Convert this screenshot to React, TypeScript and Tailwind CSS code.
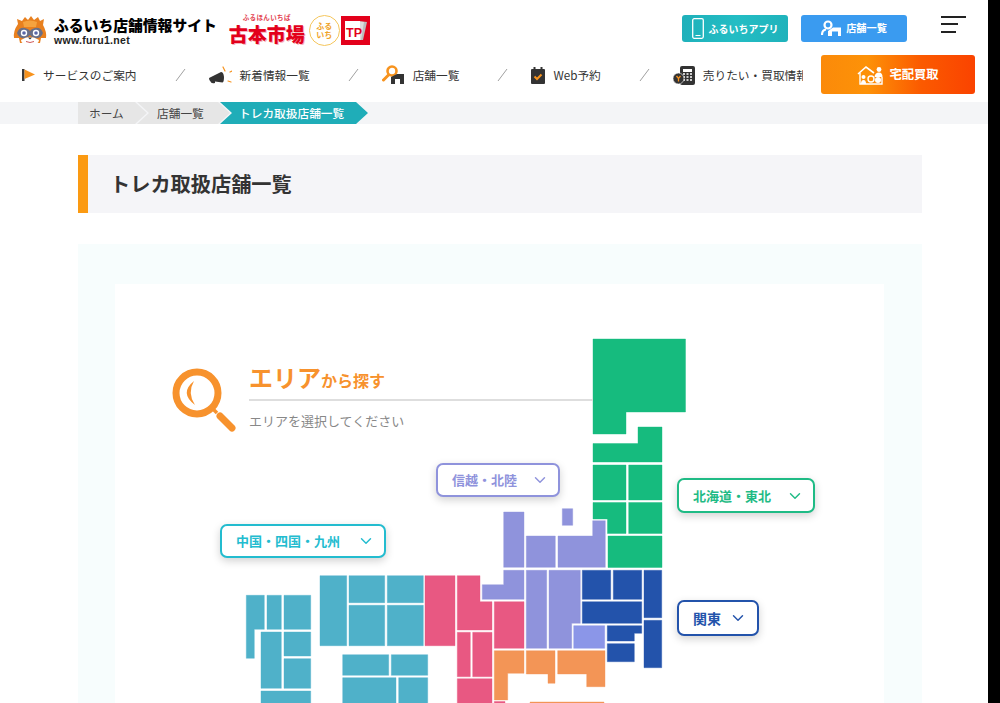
import React, { ReactElement, ReactNode } from 'react';
import { ChevronDown } from 'lucide-react';

const FlagIcon = (): ReactElement => (
  <svg width="14" height="14" viewBox="0 0 14 14">
    <rect x="0" y="1" width="2.5" height="12" fill="#3a3a3a" />
    <path d="M2.5 1.5 L13 6.5 L2.5 11 Z" fill="#f7931e" />
  </svg>
);

const MegaphoneIcon = (): ReactElement => (
  <svg width="23" height="20" viewBox="0 0 23 20">
    <path d="M0 13 L12 7 Q14.500 7 15 12 Q15 17 13.500 17.500 L6 16.500 L6 18 Q2 19 1.500 16.500 Q0 15.500 0 13 Z" fill="#333" />
    <path d="M14 2 L16 6 M21 7 L23 6 M19 16 L22 17" stroke="#f7931e" strokeWidth="1.2" strokeLinecap="round" />
  </svg>
);

const StoreIcon = (): ReactElement => (
  <svg width="23" height="20" viewBox="0 0 23 20">
    <circle cx="10" cy="6" r="4.500" fill="none" stroke="#f7931e" strokeWidth="2.600" />
    <path d="M6.500 10 L1.500 15" stroke="#f7931e" strokeWidth="3" strokeLinecap="round" />
    <path d="M9 19 V12 L15 9 H22 V19 H18 V14 H13 V19 Z" fill="#333" />
  </svg>
);

const CalendarIcon = (): ReactElement => (
  <svg width="14" height="17" viewBox="0 0 14 17">
    <rect x="0" y="2" width="14" height="15" rx="1" fill="#333" />
    <rect x="2.500" y="0" width="2" height="4" fill="#333" />
    <rect x="9.500" y="0" width="2" height="4" fill="#333" />
    <path d="M3.500 9.500 L6 12 L10.500 7.500" fill="none" stroke="#f7931e" strokeWidth="2" />
  </svg>
);

const CalcIcon = (): ReactElement => (
  <svg width="22" height="19" viewBox="0 0 22 19">
    <rect x="7" y="0" width="15" height="19" rx="2" fill="#333" />
    <rect x="10" y="3" width="9" height="3" fill="#fff" />
    <path d="M10 8 H19 M10 11 H19 M10 14 H19" stroke="#fff" strokeWidth="1.600" strokeDasharray="2 1.500" />
    <circle cx="5.500" cy="12.500" r="5.500" fill="#333" stroke="#fff" strokeWidth="0.600" />
    <path d="M3.500 10 L5.500 12.500 L7.500 10 M5.500 12.500 V15.500" fill="none" stroke="#f7931e" strokeWidth="1.300" />
  </svg>
);

const PhoneWhiteIcon = (): ReactElement => (
  <svg width="12" height="21" viewBox="0 0 12 21">
    <rect x="0.700" y="0.700" width="10.600" height="19.600" rx="1.500" fill="none" stroke="#fff" strokeWidth="1.300" />
    <path d="M3.500 17.500 H8.500" stroke="#fff" strokeWidth="1" />
  </svg>
);

const ShopWhiteIcon = (): ReactElement => (
  <svg width="21" height="17" viewBox="0 0 21 17">
    <circle cx="7" cy="5" r="3.500" fill="none" stroke="#fff" strokeWidth="2.200" />
    <path d="M1 15 Q1 10 5 9.500" fill="none" stroke="#fff" strokeWidth="2.200" />
    <path d="M7 16 V11 L12 7.500 H20 V16 H17 V11.500 H11 V16 Z" fill="#fff" />
  </svg>
);

const HouseFamilyIcon = (): ReactElement => (
  <svg width="26" height="20" viewBox="0 0 26 20">
    <path d="M1 9 L9 2 L17 8" fill="none" stroke="#fff" strokeWidth="1.600" />
    <path d="M3 8 V19 H25 V12" fill="none" stroke="#fff" strokeWidth="1.400" />
    <circle cx="6.500" cy="12" r="2" fill="#fff" />
    <path d="M4 19 Q4 15 6.500 15 Q9 15 9 19 Z" fill="#fff" />
    <circle cx="14" cy="14" r="3" fill="none" stroke="#fff" strokeWidth="1.400" />
    <circle cx="22" cy="4.500" r="2.400" fill="#fff" />
    <path d="M17.500 12 Q18 7.500 22 7.500 Q25.500 7.500 25.500 12 Z" fill="#fff" />
    <circle cx="21" cy="15" r="3" fill="#fff" />
  </svg>
);

const Mascot = (): ReactElement => (
  <svg width="34" height="29" viewBox="0 0 34 29">
    <path d="M5 8 L4 3 L9 5 L12 1 L15 4 L18 0 L21 4 L25 1 L27 5 L31 3 L30 9 Q34 16 33 22 L28 22 L27 27 H7 L6 22 L1 22 Q0 15 5 8 Z" fill="#e8801f" />
    <path d="M10 6 Q17 3 24 6 L23 11 H11 Z" fill="#f5a33f" />
    <path d="M4 17 Q6 11 12 12 Q16 13 17 15 Q18 13 22 12 Q28 11 30 17 Q28 23 22 22 Q18 21 17 19 Q16 21 12 22 Q6 23 4 17 Z" fill="#6a6f86" />
    <circle cx="11" cy="17" r="3.200" fill="#fff" />
    <circle cx="23" cy="17" r="3.200" fill="#fff" />
    <circle cx="11" cy="17" r="1.800" fill="#5a68a8" />
    <circle cx="23" cy="17" r="1.800" fill="#5a68a8" />
    <path d="M8 24 Q17 18 26 24 Q26 29 17 29 Q8 29 8 24 Z" fill="#fff" />
    <path d="M15 21.500 H19 L17 23.500 Z" fill="#333" />
    <path d="M13 25.500 Q17 27.500 21 25.500" fill="none" stroke="#d05a5a" strokeWidth="1" />
  </svg>
);

const TpLogo = (): ReactElement => (
  <svg width="29" height="29" viewBox="0 0 29 29">
    <rect width="29" height="29" fill="#e3001b" />
    <path d="M17 5 L26 6 L22 24 L18 24 Z" fill="#bbb" />
    <path d="M14 5 L23 6 L20 24 L15 24 Z" fill="#ddd" />
    <rect x="4" y="5" width="15" height="19" fill="#fff" />
    <text x="5" y="21" fontSize="12.500" fontWeight="900" fill="#e3001b" fontFamily="'Liberation Sans', sans-serif">TP</text>
  </svg>
);

const MagnifierIcon = (): ReactElement => (
  <svg width="64" height="65" viewBox="0 0 64 65">
    <circle cx="25" cy="25" r="21" fill="none" stroke="#f7922d" strokeWidth="7" />
    <path d="M22 13 Q7 25 23 37 Q15 25 22 13 Z" fill="#f7922d" />
    <path d="M41 41 L45 45" stroke="#f7922d" strokeWidth="3.500" />
    <path d="M48 48 L60 60" stroke="#f7922d" strokeWidth="7" strokeLinecap="round" />
  </svg>
);

const areas: { color: string; paths: string[] }[] = [
  {
    color: '#16bb7e',
    paths: [
      'M593 339 H685.500 V412 H626 V434 H593 Z',
      'M638 427 H662 V462 H593 V443.500 H638 Z',
      'M593 465 H626 V500 H593 Z',
      'M628.700 465 H662 V500 H628.700 Z',
      'M593 502.500 H626 V533.500 H607.500 V519 H593 Z',
      'M628.700 502.500 H662 V533.500 H628.700 Z',
      'M608 536 H662 V567.500 H608 Z',
    ],
  },
  {
    color: '#8f93dc',
    paths: [
      'M503.700 512 H524 V567.300 H503.700 Z',
      'M526.300 536 H555.300 V567.300 H526.300 Z',
      'M592.700 520.700 H605.300 V567.300 H558 V536 H592.700 Z',
      'M562.300 508.700 H572.700 V525.300 H562.300 Z',
      'M503.700 570.300 H524 V599.300 H482.300 V584.700 H503.700 Z',
      'M526.300 570.300 H546.700 V648.300 H526.300 Z',
      'M549 570.300 H580.300 V623.300 H571.700 V648.300 H549 Z',
    ],
  },
  {
    color: '#2353ab',
    paths: [
      'M582.300 570.300 H610.700 V599.300 H582.300 Z',
      'M613.300 570.300 H641.700 V599.300 H613.300 Z',
      'M644 570.300 H661.700 V617.700 H644 Z',
      'M582.300 601.700 H641.700 V623.300 H582.300 Z',
      'M607.300 625.700 H641.700 V633.300 H634.300 V641 H607.300 Z',
      'M607.300 643.700 H634.300 V661.700 H607.300 Z',
      'M644 620.300 H661.700 V667.700 H644 Z',
    ],
  },
  {
    color: '#e85882',
    paths: [
      'M425 575.700 H455 V645.700 H425 Z',
      'M457.300 575.700 H480 V601.700 H492 V630 H457.300 Z',
      'M494.300 601.700 H524 V648.300 H494.300 Z',
      'M457.300 632.300 H470.300 V676.700 H457.300 Z',
      'M472.700 632.300 H492 V676.700 H472.700 Z',
      'M457.300 678.700 H492 V710 H457.300 Z',
      'M494.300 701.500 H505 V710 H494.300 Z',
    ],
  },
  {
    color: '#f39556',
    paths: [
      'M494.300 650.700 H524 V673.300 H507.700 V700 H494.300 Z',
      'M526.300 650.700 H555 V683.300 H548 V674 H526.300 Z',
      'M557.700 650.700 H605 V686.700 H586.700 V674 H557.700 Z',
      'M530 702 H604 V710 H530 Z',
    ],
  },
  {
    color: '#4fb1c9',
    paths: [
      'M320 575.700 H346.700 V645.700 H320 Z',
      'M349 575.700 H384.700 V602.700 H349 Z',
      'M387.300 575.700 H423.300 V602.700 H387.300 Z',
      'M349 605.300 H384.700 V645.700 H349 Z',
      'M387.300 605.300 H423.300 V645.700 H387.300 Z',
      'M246.300 595.300 H264.300 V629.300 H254.300 V658.300 H246.300 Z',
      'M267 595.300 H281.300 V629.300 H267 Z',
      'M284 595.300 H310.700 V629.300 H284 Z',
      'M261 632 H281.300 V688.300 H261 Z',
      'M284 632 H310.700 V656 H284 Z',
      'M284 658.700 H310.700 V688.300 H284 Z',
      'M261 691 H310.700 V710 H261 Z',
      'M342.700 654.700 H388.700 V675.300 H342.700 Z',
      'M391.300 654.700 H427.700 V675.300 H391.300 Z',
      'M342.700 677.700 H396 V710 H342.700 Z',
      'M398.700 677.700 H427.700 V710 H398.700 Z',
    ],
  },
];

const JapanMap = (): ReactElement => (
  <svg className="absolute left-0 top-0" width="769" height="419" viewBox="115 284 769 419">
    {areas.map((area) => (
      <g key={area.color} fill={area.color} stroke={area.color} strokeWidth="0.400" strokeLinejoin="round">
        {area.paths.map((d) => (
          <path key={d} d={d} />
        ))}
      </g>
    ))}
    <path
      d="M573.700 625.700 H604.700 V648.300 H573.700 Z"
      fill="#8b96e8"
      stroke="#8b96e8"
      strokeWidth="0.400"
      strokeLinejoin="round"
    />
  </svg>
);

const NavItem = ({ icon, label }: { icon: ReactNode; label: string }): ReactElement => (
  <>
    <div className="flex shrink-0 items-center">
      {icon}
      <span className="whitespace-nowrap text-[11.700px] leading-none text-[#333]">{label}</span>
    </div>
    <svg className="ml-[38px] mr-[23px] shrink-0" width="11" height="14" viewBox="0 0 11 14">
      <path d="M10 1 L1 13" stroke="#888" strokeWidth="0.800" />
    </svg>
  </>
);

const AreaSelect = ({
  label,
  className,
  chevronClass,
}: {
  label: string;
  className: string;
  chevronClass: string;
}): ReactElement => (
  <div
    className={`absolute flex items-center rounded-[7px] border-2 bg-white font-bold shadow-[0_3px_8px_rgba(0,0,0,0.18)] ${className}`}
  >
    <span className="whitespace-nowrap">{label}</span>
    <ChevronDown className={`absolute top-1/2 -translate-y-1/2 ${chevronClass}`} size={18} strokeWidth={1.9} />
  </div>
);

export default function App(): ReactElement {
  return (
    <div className="flex h-[703px] overflow-hidden bg-white font-['Noto_Sans_CJK_JP','Noto_Sans',sans-serif]">
      <div className="w-[988px] shrink-0">
        <header className="h-[102px]">
          <div className="flex h-[50px] items-center pr-[22px]">
            <div className="ml-[13px] mt-[10px] flex items-center">
              <Mascot />
              <div className="ml-[7px] flex flex-col">
                <span className="text-[14.800px] font-black leading-[18px] text-black">ふるいち店舗情報サイト</span>
                <span className="mt-[1px] font-['Liberation_Sans',sans-serif] text-[10.500px] font-bold leading-[10px] tracking-[0.03em] text-[#222]">
                  www.furu1.net
                </span>
              </div>
              <div className="ml-[11px] -mt-[2px] flex w-[78px] flex-col items-center">
                <span className="text-[6.500px] font-bold leading-[9px] tracking-[0.06em] text-[#e3414f]">ふるほんいちば</span>
                <span className="whitespace-nowrap text-[19px] font-black leading-[23px] text-[#e3001b] [text-shadow:1px_1px_0_#f4b4bc]">
                  古本市場
                </span>
              </div>
              <div className="ml-[3px] flex h-[31px] w-[31px] flex-col items-center justify-center rounded-full border border-[#f5c65c] text-[8px] font-bold leading-[9px] text-[#f0a32a]">
                <span>ふる</span>
                <span>いち</span>
              </div>
              <div className="ml-[1px]">
                <TpLogo />
              </div>
            </div>
            <div className="ml-auto mt-[6px] flex h-[27px] w-[106px] items-center justify-center gap-[5px] rounded-[3px] bg-[linear-gradient(100deg,#1fb0ba,#23bdc4,#1fb2bb)]">
              <PhoneWhiteIcon />
              <span className="text-[10px] font-bold text-white">ふるいちアプリ</span>
            </div>
            <div className="ml-[13px] mt-[6px] flex h-[27px] w-[106px] items-center justify-center gap-[4px] rounded-[3px] bg-[#3a9bf0]">
              <ShopWhiteIcon />
              <span className="text-[10.200px] font-bold text-white">店舗一覧</span>
            </div>
            <div className="ml-[34px] -mt-[2px] flex w-[25px] flex-col gap-[5.500px]">
              <div className="h-[2px] w-[25px] bg-[#222]" />
              <div className="h-[2px] w-[17px] bg-[#222]" />
              <div className="h-[2px] w-[15px] bg-[#222]" />
            </div>
          </div>
          <div className="flex h-[52px] items-start">
            <div className="mt-[5px] flex h-[40px] w-[803px] items-center overflow-hidden pl-[22px]">
              <NavItem icon={<span className="mr-[7px] flex"><FlagIcon /></span>} label="サービスのご案内" />
              <NavItem icon={<span className="mr-[8px] flex"><MegaphoneIcon /></span>} label="新着情報一覧" />
              <NavItem icon={<span className="mr-[8px] flex"><StoreIcon /></span>} label="店舗一覧" />
              <NavItem icon={<span className="mr-[8px] flex"><CalendarIcon /></span>} label="Web予約" />
              <NavItem icon={<span className="mr-[8px] flex"><CalcIcon /></span>} label="売りたい・買取情報" />
            </div>
            <div className="ml-[18px] mt-[5px] flex h-[39px] w-[154px] items-center justify-center gap-[6px] rounded-[3px] bg-[linear-gradient(90deg,#fb8a0a,#fd9208_30%,#fb5a00_65%,#fa4300)]">
              <HouseFamilyIcon />
              <span className="text-[12.300px] font-bold text-white">宅配買取</span>
            </div>
          </div>
        </header>

        <nav className="h-[22px] bg-[#f4f5f7] pl-[78px]">
          <ol className="flex h-[22px] items-center text-[11.700px] leading-none text-[#444]">
            <li className="flex h-[22px] w-[69px] items-center bg-[#e6e6e6] pl-[11px] [clip-path:polygon(0_0,calc(100%-12px)_0,100%_50%,calc(100%-12px)_100%,0_100%)]">
              ホーム
            </li>
            <li className="-ml-[10px] flex h-[22px] w-[93px] items-center bg-[#e6e6e6] pl-[20px] [clip-path:polygon(0_0,calc(100%-12px)_0,100%_50%,calc(100%-12px)_100%,0_100%,12px_50%)]">
              店舗一覧
            </li>
            <li className="-ml-[10px] flex h-[22px] w-[148px] items-center bg-[#1fadb8] pl-[19px] font-medium text-white [clip-path:polygon(0_0,calc(100%-12px)_0,100%_50%,calc(100%-12px)_100%,0_100%,12px_50%)]">
              トレカ取扱店舗一覧
            </li>
          </ol>
        </nav>

        <main className="ml-[78px] mt-[31px] w-[844px]">
          <h1 className="flex h-[58px] items-center border-l-[10px] border-[#fb9a12] bg-[#f5f5f8] pl-[22px] pt-[1px] text-[20.200px] font-bold text-[#333]">
            トレカ取扱店舗一覧
          </h1>
          <section className="mt-[31px] h-[459px] bg-[#f7fdfd] px-[37px] pt-[40px]">
            <div className="relative h-[419px] w-[769px] bg-white">
              <JapanMap />
              <div className="relative flex pl-[57px] pt-[84px]">
                <MagnifierIcon />
                <div className="ml-[13px] w-[344px]">
                  <div className="flex h-[33px] items-end border-b-2 border-[#dedede] pb-[6px] font-bold leading-none text-[#f7922d]">
                    <span className="text-[24px] leading-[32px]">エリア</span>
                    <span className="text-[16px] leading-[25px]">から探す</span>
                  </div>
                  <p className="mt-[10px] whitespace-nowrap text-[13px] leading-[20px] text-[#888]">
                    エリアを選択してください
                  </p>
                </div>
              </div>
              <AreaSelect
                label="信越・北陸"
                className="left-[321px] top-[179px] h-[34px] w-[124px] border-[#8f93dc] pl-[14px] text-[13px] text-[#8f93dc]"
                chevronClass="right-[9px] text-[#8f93dc]"
              />
              <AreaSelect
                label="北海道・東北"
                className="left-[562px] top-[194px] h-[35px] w-[138px] border-[#1fbb85] pl-[14px] text-[13px] text-[#1fbb85]"
                chevronClass="right-[9px] text-[#1fbb85]"
              />
              <AreaSelect
                label="中国・四国・九州"
                className="left-[105px] top-[240px] h-[34px] w-[166px] border-[#23bccf] pl-[14px] text-[13px] text-[#23bccf]"
                chevronClass="right-[9px] text-[#23bccf]"
              />
              <AreaSelect
                label="関東"
                className="left-[562px] top-[316px] h-[36px] w-[82px] border-[#2353ab] pl-[14px] text-[14px] text-[#2353ab]"
                chevronClass="right-[10px] text-[#2353ab]"
              />
            </div>
          </section>
        </main>
      </div>
      <div className="flex-1 bg-black" />
    </div>
  );
}
